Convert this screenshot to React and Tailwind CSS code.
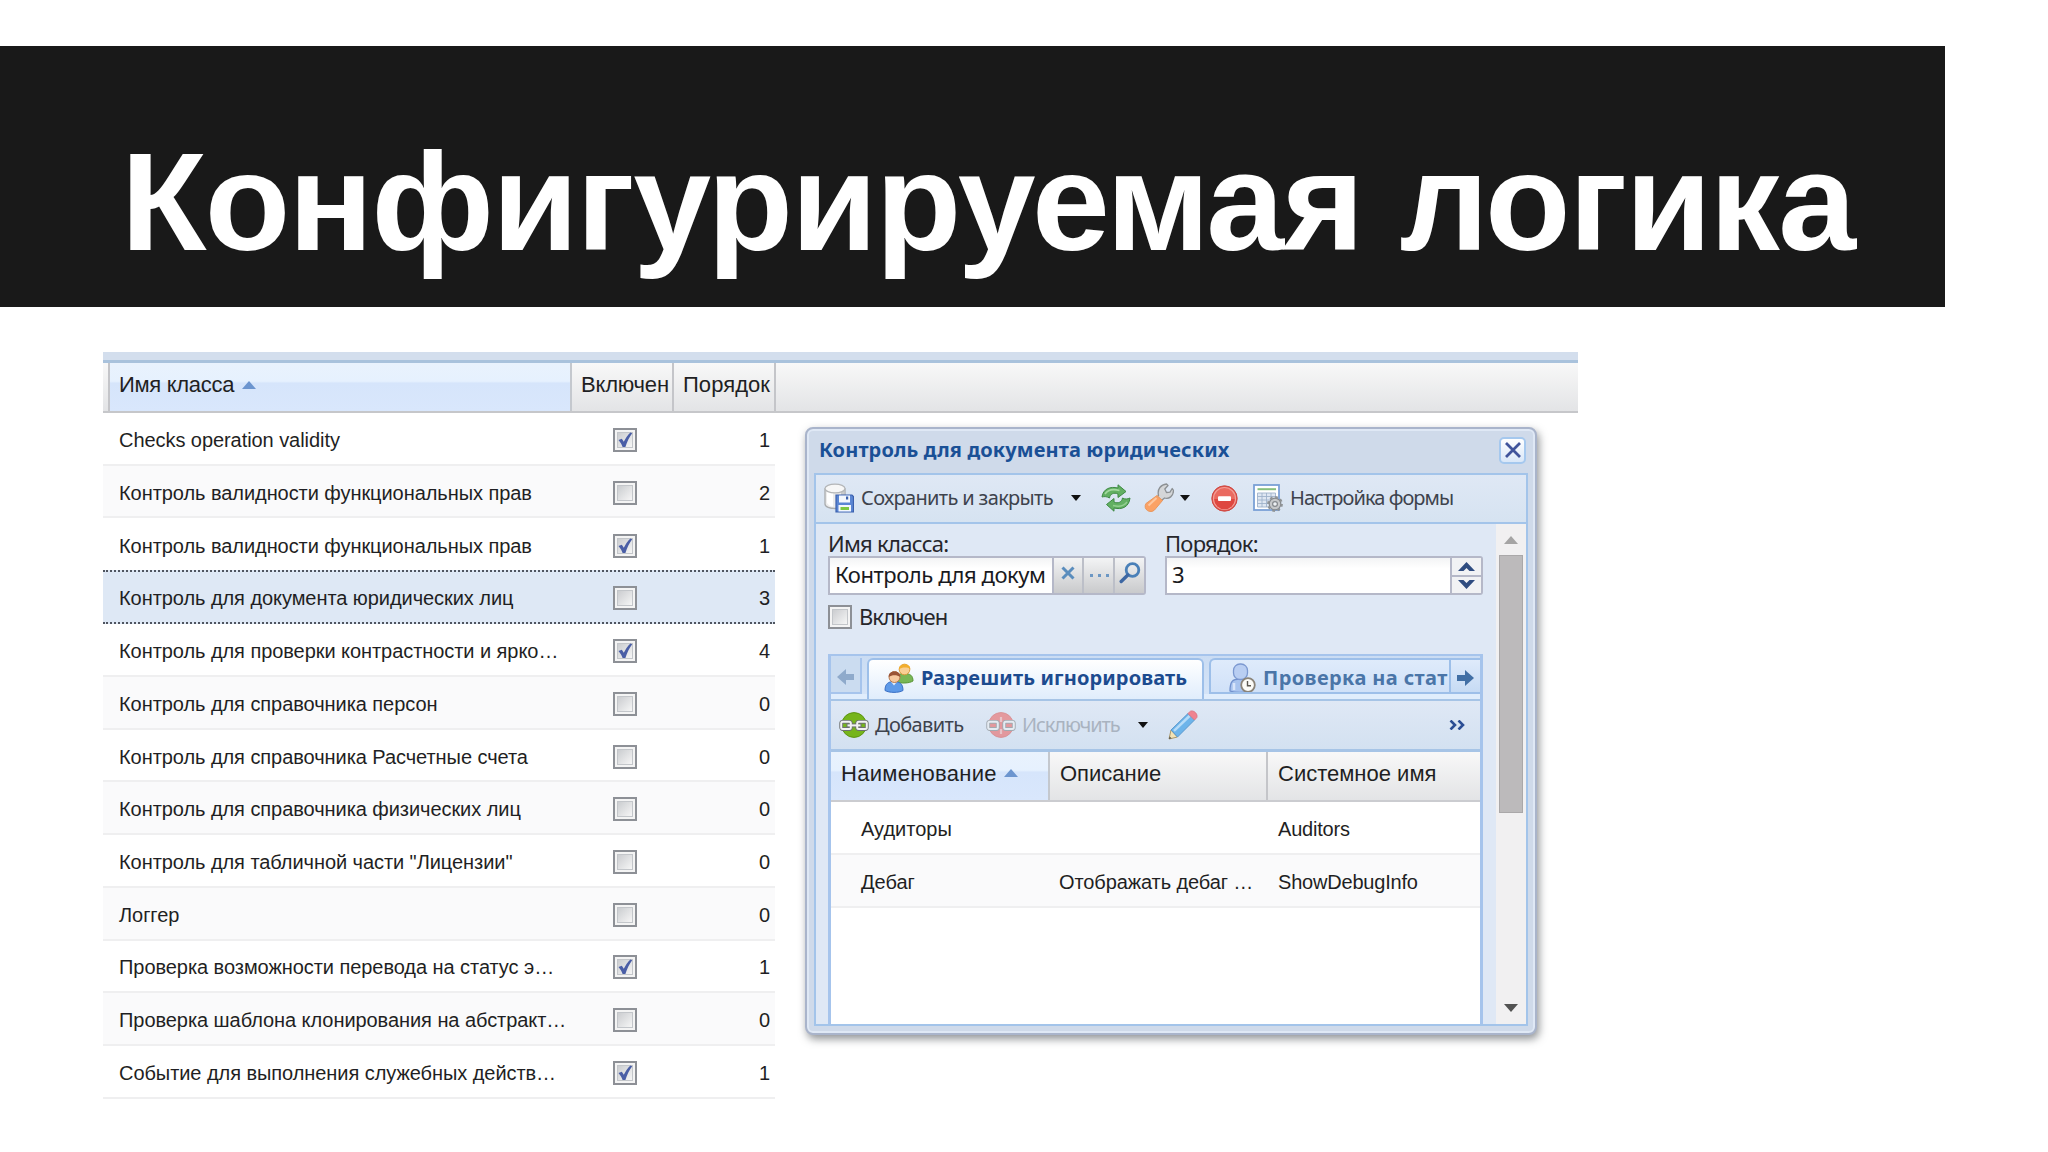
import clsx from 'clsx';

const CLASSES = [
    { name: 'Checks operation validity', enabled: true, order: 1 },
    { name: 'Контроль валидности функциональных прав', enabled: false, order: 2 },
    { name: 'Контроль валидности функциональных прав', enabled: true, order: 1 },
    { name: 'Контроль для документа юридических лиц', enabled: false, order: 3, selected: true },
    { name: 'Контроль для проверки контрастности и ярко…', enabled: true, order: 4 },
    { name: 'Контроль для справочника персон', enabled: false, order: 0 },
    { name: 'Контроль для справочника Расчетные счета', enabled: false, order: 0 },
    { name: 'Контроль для справочника физических лиц', enabled: false, order: 0 },
    { name: 'Контроль для табличной части "Лицензии"', enabled: false, order: 0 },
    { name: 'Логгер', enabled: false, order: 0 },
    { name: 'Проверка возможности перевода на статус э…', enabled: true, order: 1 },
    { name: 'Проверка шаблона клонирования на абстракт…', enabled: false, order: 0 },
    { name: 'Событие для выполнения служебных действ…', enabled: true, order: 1 },
];

const ROLES = [
    { name: 'Аудиторы', description: '', system: 'Auditors' },
    { name: 'Дебаг', description: 'Отображать дебаг …', system: 'ShowDebugInfo' },
];

function Checkbox({ checked }) {
    return (
        <span className="flex h-6 w-6 shrink-0 items-center justify-center border-2 border-[#8d9096] bg-[#f4f4f4]">
            <span className="flex h-4 w-4 items-center justify-center border border-[#c3c6ca] bg-linear-to-br from-[#cbcdd0] to-[#f6f6f6]">
                {checked && (
                    <svg viewBox="0 0 16 16" className="h-4 w-4 shrink-0 overflow-visible">
                        <path d="M1.500 8 L4.800 6.800 L6.800 9.800 C8.600 6 10.600 3 13.400 0.400 L15.200 1.200 C12.400 5 10 9.600 8.400 15 L5.600 15 C4.600 12.400 3.400 10.200 1.500 8Z" fill="#4a5ea6" />
                    </svg>
                )}
            </span>
        </span>
    );
}

function SortArrow() {
    return (
        <svg viewBox="0 0 14 8" className="h-2 w-3.5 shrink-0">
            <path d="M7 0 L14 8 H0Z" fill="#6c95cf" />
        </svg>
    );
}

function Caret({ className }) {
    return (
        <svg viewBox="0 0 10 6" className={clsx('h-1.5 w-2.5 shrink-0', className)}>
            <path d="M0 0 H10 L5 6Z" fill="#111" />
        </svg>
    );
}

function SaveIcon() {
    return (
        <svg viewBox="0 0 30 30" className="h-[30px] w-[30px] shrink-0">
            <path d="M1 6 V21 C1 27 21 27 21 21 V6Z" fill="#ececec" stroke="#a9abad" strokeWidth="1.3" />
            <path d="M3 8 V20 C5 23 8 23.500 9 23.500 V9Z" fill="#fff" />
            <path d="M17 8 V22 L20 21 V7Z" fill="#c9cacb" />
            <ellipse cx="11" cy="5.500" rx="10" ry="4.300" fill="#f7f7f7" stroke="#b4b6b8" strokeWidth="1.300" />
            <path d="M12 12 H28 L29.500 13.500 V29 H12Z" fill="#5b86d3" stroke="#3b60ad" strokeWidth="1.200" />
            <rect x="15" y="12.500" width="11" height="7" fill="#f3f7fd" />
            <rect x="22" y="13.500" width="2.200" height="3" fill="#3b60ad" />
            <rect x="14.500" y="22" width="12.500" height="6.500" fill="#f3f7fd" />
            <rect x="16.500" y="24" width="8.500" height="3" fill="#7dc843" />
        </svg>
    );
}

function RefreshIcon() {
    return (
        <svg viewBox="0 0 30 28" className="h-7 w-[30px] shrink-0" fill="#62b062" stroke="#3f8a44" strokeWidth="1" strokeLinejoin="round">
            <path d="M1 13 C2 5 9 2 17 4 L17 0.800 L25 7.500 L17 13.500 L17 10 C13 8 9 10 8.500 14 C6 12.500 3.500 12.300 1 13Z" />
            <path d="M29 14 C28 23 21 26 13 24 L13 27.200 L5.500 20.500 L13 14.500 L13 18 C17 20 21 18 21.500 14 C24 15.500 26.500 15.200 29 14Z" />
            <path d="M4 10 C7 5.500 12 4.800 18.500 6.500" fill="none" stroke="#a4d9a0" strokeWidth="1.600" />
            <path d="M26 18 C23 22 18 23 12 21.500" fill="none" stroke="#93cf90" strokeWidth="1.400" />
        </svg>
    );
}

function WrenchIcon() {
    return (
        <svg viewBox="0 0 30 30" className="h-[30px] w-[30px] shrink-0" strokeLinejoin="round">
            <path d="M14.500 12.500 C13 6 17 1.500 22.500 1 L24 2.500 L20.800 6 L22.500 9.500 L26 9.200 L28.200 5.500 L29.500 7.500 C29.500 13 25 16.500 20.500 15 L17.500 17.500 L13 14Z" fill="#d4d6d8" stroke="#8c9093" strokeWidth="1.300" />
            <path d="M13 12.500 L18.500 17.500 L10.500 27 C6.500 31 -1.500 26.500 2 20.500Z" fill="#fba265" stroke="#e8985f" strokeWidth="1" />
            <path d="M12.500 15 L4.500 22.500" stroke="#fdc79f" strokeWidth="2" />
        </svg>
    );
}

function StopIcon() {
    return (
        <svg viewBox="0 0 27 27" className="h-[27px] w-[27px] shrink-0">
            <circle cx="13.500" cy="13.500" r="12.700" fill="#e0514b" stroke="#cc4a44" strokeWidth="1" />
            <circle cx="13.500" cy="13.500" r="11" fill="#ea6a60" stroke="#f39d95" strokeWidth="1.200" />
            <path d="M3.200 14 A10.300 10.300 0 0 0 23.800 14Z" fill="#de4740" />
            <rect x="7" y="11.200" width="13" height="4.800" rx="1" fill="#fff" />
        </svg>
    );
}

function FormIcon() {
    return (
        <svg viewBox="0 0 30 28" className="h-7 w-[30px] shrink-0">
            <rect x="1" y="1" width="25" height="25" fill="#fff" stroke="#7aa0d6" strokeWidth="1.800" />
            <path d="M4.500 5.200 H23" stroke="#86bf7c" strokeWidth="2" />
            <rect x="4.500" y="9" width="18" height="14" fill="#dfe7f2" />
            <path d="M4.500 9 H22.500 M4.500 12.500 H22.500 M4.500 16 H22.500 M4.500 19.500 H22.500 M4.500 23 H22.500 M4.500 9 V23 M9 9 V23 M13.500 9 V23 M18 9 V23 M22.500 9 V23" stroke="#9fb2cb" strokeWidth="0.900" />
            <circle cx="22" cy="20" r="5.800" fill="#c6c8ca" stroke="#85898d" strokeWidth="1.200" />
            <circle cx="22" cy="20" r="6.800" fill="none" stroke="#8f9396" strokeWidth="2.200" strokeDasharray="2.700 2.640" />
            <circle cx="22" cy="20" r="2.400" fill="#eef1f4" stroke="#85898d" strokeWidth="1.200" />
        </svg>
    );
}

function UsersIcon() {
    return (
        <svg viewBox="0 0 30 30" className="h-[30px] w-[30px] shrink-0">
            <path d="M12 19 C12 12 15 10.500 20.500 10.500 C26 10.500 29 12.500 29 18 C25 20.500 17 20.500 12 19Z" fill="#79b755" stroke="#5a9639" strokeWidth="1" />
            <circle cx="20.500" cy="6.500" r="5.300" fill="#f9cf94" stroke="#d99a3a" strokeWidth="1" />
            <path d="M15 6.500 C14 0 26.500 -1 26.300 6 C23 4 18 4 15 6.500Z" fill="#f2ae2e" />
            <path d="M1 27.500 C1 20.500 4.500 18.500 10 18.500 C15.500 18.500 19 20.500 19 27.500 C15 30 5 30 1 27.500Z" fill="#5e9ae8" stroke="#3a6fc4" strokeWidth="1" />
            <path d="M7 18.800 L10 22.500 L13 18.800Z" fill="#e5effb" />
            <circle cx="10.500" cy="14" r="5.500" fill="#f6c9a0" stroke="#b77a50" strokeWidth="1" />
            <path d="M4.800 14 C4 6.800 17 6.800 16.200 14 C13 11.500 8 11.500 4.800 14Z" fill="#9a5436" />
        </svg>
    );
}

function UserClockIcon() {
    return (
        <svg viewBox="0 0 27 30" className="h-[30px] w-[27px] shrink-0">
            <path d="M1 28 C1 19 3 16 11 16 C19 16 21 19 21 28 C16 30 6 30 1 28Z" fill="#a8c3ee" stroke="#7291cd" strokeWidth="1.300" />
            <path d="M5 20 V27" stroke="#d9e5fa" strokeWidth="2.500" />
            <rect x="4.500" y="1" width="14" height="15.500" rx="6.500" fill="#b9cef2" stroke="#7b98d0" strokeWidth="1.300" />
            <circle cx="19" cy="22" r="6.800" fill="#fbfbf8" stroke="#8b8479" strokeWidth="1.800" />
            <path d="M18.500 18 V22.800 H22" fill="none" stroke="#5b5751" strokeWidth="1.400" />
        </svg>
    );
}

// Chain link on a coloured disc: green adds a relation, red removes it
function LinkIcon({ disc, rim, faded }) {
    return (
        <svg viewBox="0 0 30 26" className={clsx('h-[26px] w-[30px] shrink-0', faded && 'opacity-50')}>
            <circle cx="15" cy="13" r="12.400" fill={disc} stroke={rim} strokeWidth="1" />
            <g fill="none" strokeLinejoin="round">
                <rect x="2.200" y="9.800" width="9.600" height="7.200" rx="1.500" stroke="#6d7170" strokeWidth="3.800" />
                <rect x="18.200" y="9.800" width="9.600" height="7.200" rx="1.500" stroke="#6d7170" strokeWidth="3.800" />
                {!faded && <path d="M7.500 13.400 H22.500" stroke="#6d7170" strokeWidth="4" />}
                <rect x="2.200" y="9.800" width="9.600" height="7.200" rx="1.500" stroke="#f2f2f2" strokeWidth="2" />
                <rect x="18.200" y="9.800" width="9.600" height="7.200" rx="1.500" stroke="#f2f2f2" strokeWidth="2" />
                {faded
                    ? <path d="M15 5 V10 M15 17 V22" stroke="#f6a5a0" strokeWidth="2.200" />
                    : <path d="M8.500 13.400 H21.500" stroke="#f2f2f2" strokeWidth="2" />}
            </g>
        </svg>
    );
}

function PencilIcon() {
    return (
        <svg viewBox="0 0 30 30" className="h-[30px] w-[30px] shrink-0" strokeLinejoin="round">
            <path d="M1 29 L3 20 L9.500 27Z" fill="#f3e3b5" stroke="#a9976b" strokeWidth="1" />
            <path d="M1 29 L1.700 26.500 L3.500 28.300Z" fill="#4a4a4a" />
            <path d="M3 20 L20 3.500 L26.500 10 L9.500 27Z" fill="#6db4ea" stroke="#5a99ce" strokeWidth="1" />
            <path d="M6 20.800 L21.500 6" stroke="#b7dcf8" strokeWidth="2.500" />
            <path d="M20 3.500 L22.500 1.200 C26 0 30 4 28.800 7.500 L26.500 10Z" fill="#f08390" stroke="#dc7a86" strokeWidth="1" />
        </svg>
    );
}

function SearchIcon() {
    return (
        <svg viewBox="0 0 22 22" className="h-[22px] w-[22px] shrink-0" fill="none" strokeLinecap="round">
            <circle cx="13.500" cy="8" r="6.300" stroke="#4a80b8" strokeWidth="2.800" />
            <path d="M8.800 13 L2.200 19.500" stroke="#3d67a3" strokeWidth="3.400" />
        </svg>
    );
}

function ArrowIcon({ className }) {
    return (
        <svg viewBox="0 0 17 16" className={clsx('h-4 w-[17px] shrink-0', className)}>
            <path d="M0 5 H8 V0 L17 8 L8 16 V11 H0Z" fill="currentColor" />
        </svg>
    );
}

function ClassGrid() {
    return (
        <div className="w-[1475px] font-['Liberation_Sans',sans-serif] text-[#1f1f23]">
            <div className="h-2 bg-[#d3deed]" />
            <div className="h-[3px] bg-[#a9c2dc]" />
            <div className="flex h-[50px] border-b-2 border-[#c6c7ca] bg-linear-to-b from-[#f8f8f8] to-[#e3e4e6] text-[22px]">
                <div className="w-[7px] border-r-2 border-[#c4c5c9]" />
                <div className="flex w-[462px] items-center gap-[7px] border-r-2 border-[#c4c8ce] bg-[linear-gradient(#e9f2fd_0%,#e6f1fe_38%,#d6e5fb_42%,#d9e7fc_100%)] pb-[5px] pl-[9px]">
                    <span className="w-[116px] tracking-[-0.300px] whitespace-nowrap">Имя класса</span>
                    <SortArrow />
                </div>
                <div className="w-[102px] border-r-2 border-[#c4c5c9] pt-[8px] pl-[9px] leading-[28px] tracking-[-0.200px] whitespace-nowrap">Включен</div>
                <div className="w-[102px] border-r-2 border-[#c4c5c9] pt-[8px] pl-[9px] leading-[28px] tracking-[0.050px] whitespace-nowrap">Порядок</div>
            </div>
            {CLASSES.map((c, i) => (
                <div
                    key={i}
                    className={clsx(
                        'flex w-[672px] items-center pr-[5px] pl-4 text-[20px] tracking-[-0.060px]',
                        c.selected
                            ? 'h-[54px] border-y-2 border-dotted border-[#4f5560] bg-[#dee8f5] pt-px'
                            : 'h-[52.700px] border-b-2 border-[#efeff0] pt-[3px]',
                        !c.selected && i % 2 === 1 && 'bg-[#fafafb]',
                        CLASSES[i + 1]?.selected && 'h-[52px]! border-b-0!'
                    )}
                >
                    <span className="w-[494px] whitespace-nowrap">{c.name}</span>
                    <Checkbox checked={c.enabled} />
                    <span className="flex-1 text-right">{c.order}</span>
                </div>
            ))}
        </div>
    );
}

function WindowToolbar() {
    return (
        <div className="flex h-[49px] shrink-0 items-center border-b-2 border-[#a3c4ea] bg-linear-to-b from-[#dfe8f5] to-[#d6e3f1] pb-px pl-2 text-[20px] text-[#3e434d]">
            <SaveIcon />
            <span className="ml-[7px] w-[192px] tracking-[-0.660px] whitespace-nowrap">Сохранить и закрыть</span>
            <Caret className="mr-5 ml-[18px]" />
            <RefreshIcon />
            <span className="w-[13px]" />
            <WrenchIcon />
            <Caret className="mr-[21px] ml-[6px]" />
            <StopIcon />
            <span className="w-[15px]" />
            <FormIcon />
            <span className="ml-[7px] tracking-[-0.950px] whitespace-nowrap">Настройка формы</span>
        </div>
    );
}

function ClassFields() {
    return (
        <>
            <div className="flex gap-[19px]">
                <div className="w-[318px]">
                    <div className="h-[26px] text-[22px] leading-[26px] tracking-[-0.720px]">Имя класса:</div>
                    <div className="flex h-[39px] rounded-r-[3px] border-2 border-[#b5b8c8] bg-white">
                        <div className="w-[222px] bg-linear-to-b from-[#f3f4f5] to-white to-30% pl-[5px] text-[22px] leading-[33px] tracking-[-0.450px] whitespace-nowrap text-[#1a1a1e]">Контроль для докум</div>
                        <div className="flex flex-1 border-l-2 border-[#b5b8c8] bg-linear-to-b from-[#f3f4f5] to-[#c9cacc]">
                            <div className="flex w-[30px] items-center justify-center border-r-2 border-[#bcbfc8] pr-px pb-[5px]">
                                <svg viewBox="0 0 14 14" className="h-3.5 w-3.5">
                                    <path d="M1.500 1.500 L12.500 12.500 M12.500 1.500 L1.500 12.500" stroke="#5a8dbd" strokeWidth="3" />
                                </svg>
                            </div>
                            <div className="flex w-[31px] items-center justify-center gap-[5px] border-r-2 border-[#bcbfc8] pl-[2px]">
                                <span className="h-[3px] w-[3px] bg-[#6c97c4]" />
                                <span className="h-[3px] w-[3px] bg-[#6c97c4]" />
                                <span className="h-[3px] w-[3px] bg-[#6c97c4]" />
                            </div>
                            <div className="flex flex-1 items-center justify-center pb-[5px]">
                                <SearchIcon />
                            </div>
                        </div>
                    </div>
                </div>
                <div className="w-[318px]">
                    <div className="h-[26px] text-[22px] leading-[26px] tracking-[-0.780px]">Порядок:</div>
                    <div className="flex h-[39px] rounded-r-[3px] border-2 border-[#b5b8c8] bg-white">
                        <div className="flex-1 bg-linear-to-b from-[#f3f4f5] to-white to-30% pl-[5px] text-[22px] leading-[33px] text-[#1a1a1e]">3</div>
                        <div className="flex w-[31px] flex-col border-l-2 border-[#b5b8c8] bg-[#f1f2f4]">
                            <div className="flex flex-1 items-center justify-center border-b-2 border-[#b5b8c8]">
                                <svg viewBox="0 0 17 9" className="h-[9px] w-[17px]">
                                    <path d="M0 9 L8.500 0 L17 9 H11.500 L8.500 6 L5.500 9Z" fill="#2f4c80" />
                                </svg>
                            </div>
                            <div className="flex flex-1 items-center justify-center">
                                <svg viewBox="0 0 17 9" className="h-[9px] w-[17px]">
                                    <path d="M0 0 H5.500 L8.500 3 L11.500 0 H17 L8.500 9Z" fill="#2f4c80" />
                                </svg>
                            </div>
                        </div>
                    </div>
                </div>
            </div>
            <div className="mt-[10px] flex h-6 items-center gap-[7px] text-[22px]">
                <Checkbox />
                <span className="pb-[2px] tracking-[-0.950px]">Включен</span>
            </div>
        </>
    );
}

function TabPanel() {
    return (
        <div className="mt-[25px] flex w-[655px] flex-1 flex-col border-x-[3px] border-t-2 border-[#a6c4ec] bg-white">
            <div className="flex h-[43px] shrink-0 flex-col bg-linear-to-b from-[#cadcf3] to-[#d6e5f8]">
                <div className="flex h-[38px] pt-[2px]">
                    <div className="flex w-[31px] items-center justify-center border-r-2 border-b-2 border-[#a6c4ec] bg-[#cbdcf0] pt-[3px] text-[#8faacb]">
                        <ArrowIcon className="rotate-180" />
                    </div>
                    <div className="z-10 ml-[5px] flex h-[41px] w-[337px] items-center rounded-t-[6px] border-2 border-b-0 border-[#9dbfe9] bg-linear-to-b from-white to-[#e0edfc] pb-[3px] pl-[15px] text-[20px] font-bold text-[#1c4b8f]">
                        <UsersIcon />
                        <span className="ml-[7px] tracking-[0.120px] whitespace-nowrap">Разрешить игнорировать</span>
                    </div>
                    <div className="ml-[5px] flex min-w-0 flex-1 items-center overflow-hidden rounded-tl-[6px] border-2 border-r-0 border-[#9dbfe9] bg-linear-to-b from-[#dfebfb] to-[#d0e1f8] pt-[3px] pl-[18px] text-[20px] font-bold text-[#4a75a8]">
                        <UserClockIcon />
                        <span className="ml-[7px] tracking-[0.400px] whitespace-nowrap">Проверка на стат</span>
                    </div>
                    <div className="flex w-[31px] items-center justify-center border-2 border-r-0 border-[#9dbfe9] bg-linear-to-b from-[#dfebfb] to-[#c6dbf4] pt-[3px] text-[#416fa5]">
                        <ArrowIcon />
                    </div>
                </div>
                <div className="flex-1 bg-[#e0edfc]" />
            </div>
            <div className="flex h-[53px] shrink-0 items-center border-t-2 border-b-[3px] border-[#a6c4e6] bg-linear-to-b from-[#dfe8f5] to-[#d3e1f1] pl-2 text-[20px] text-[#3e434d]">
                <LinkIcon disc="#76b51b" rim="#5b9410" />
                <span className="ml-[6px] w-[90px] tracking-[-0.620px] whitespace-nowrap">Добавить</span>
                <span className="w-[21px]" />
                <LinkIcon disc="#ee4f4a" rim="#d8423d" faded />
                <span className="ml-[6px] w-[98px] tracking-[-1.100px] whitespace-nowrap text-[#a9b3c0]">Исключить</span>
                <Caret className="mr-5 ml-[18px]" />
                <PencilIcon />
                <svg viewBox="0 0 16 10" className="mr-[15px] ml-auto h-2.5 w-4" fill="none" stroke="#2a4d94" strokeWidth="2.600">
                    <path d="M1.500 0.500 L6 5 L1.500 9.500 M9.500 0.500 L14 5 L9.500 9.500" />
                </svg>
            </div>
            <div className="flex h-[50px] shrink-0 border-b-2 border-[#cbccd0] bg-linear-to-b from-[#f8f8f8] to-[#e3e4e6] font-['Liberation_Sans',sans-serif] text-[22px] text-[#1f1f23]">
                <div className="flex w-[219px] items-center gap-2 border-r-2 border-[#c4c8ce] bg-[linear-gradient(#e9f2fd_0%,#e6f1fe_38%,#d6e5fb_42%,#d9e7fc_100%)] pb-[6px] pl-[10px]">
                    <span className="w-[155px] tracking-[0.280px] whitespace-nowrap">Наименование</span>
                    <SortArrow />
                </div>
                <div className="flex w-[218px] items-center border-r-2 border-[#c4c5c9] pb-[6px] pl-[10px]">Описание</div>
                <div className="flex items-center pb-[6px] pl-[10px] whitespace-nowrap">Системное имя</div>
            </div>
            {ROLES.map((r, i) => (
                <div
                    key={r.system}
                    className={clsx(
                        "flex h-[53px] shrink-0 items-center border-b-2 border-[#efeff0] pt-[3px] pl-[30px] font-['Liberation_Sans',sans-serif] text-[20px] text-[#1f1f23]",
                        i % 2 === 1 && 'bg-[#fafafb]'
                    )}
                >
                    <span className="w-[198px]">{r.name}</span>
                    <span className="w-[219px] tracking-[-0.100px] whitespace-nowrap">{r.description}</span>
                    <span className="tracking-[-0.200px]">{r.system}</span>
                </div>
            ))}
        </div>
    );
}

function ClassWindow() {
    return (
        <div className="absolute top-[427px] left-[805px] flex h-[608px] w-[732px] flex-col rounded-[8px] border-2 border-[#a9b4cb] bg-[#cfdaea] px-[7px] pb-[7px] font-['Noto_Sans',sans-serif] text-[#26262b] shadow-[2px_4px_9px_rgba(70,75,80,0.600)] inset-shadow-[0_0_0_2px_#dfe8f5]">
            <div className="flex h-[44px] shrink-0 items-center justify-between pr-[2px] pb-[2px] pl-[5px]">
                <span className="text-[20px] font-bold tracking-[0.130px] whitespace-nowrap text-[#1a5096]">Контроль для документа юридических</span>
                <span className="flex h-[27px] w-[27px] items-center justify-center rounded-[5px] border-2 border-[#a5c8ee] bg-linear-to-b from-white to-[#d9e7f8]">
                    <svg viewBox="0 0 16 16" className="h-4 w-4">
                        <path d="M1 1 L15 15 M15 1 L1 15" stroke="#40549b" strokeWidth="2.800" />
                    </svg>
                </span>
            </div>
            <div className="flex min-h-0 flex-1 flex-col border-2 border-[#a3c4ea] bg-[#dfe8f5]">
                <WindowToolbar />
                <div className="flex min-h-0 flex-1">
                    <div className="flex flex-1 flex-col pt-[6px] pl-3">
                        <ClassFields />
                        <TabPanel />
                    </div>
                    <div className="flex w-[30px] flex-col items-center bg-[#f1f0f1] pt-3 pr-px pb-3">
                        <svg viewBox="0 0 14 8" className="h-2 w-3.5 shrink-0">
                            <path d="M7 0 L14 8 H0Z" fill="#a5a4a4" />
                        </svg>
                        <div className="mt-[11px] h-[258px] w-6 border border-[#aaa8a9] bg-[#bcbabb]" />
                        <svg viewBox="0 0 14 8" className="mt-auto h-2 w-3.5 shrink-0">
                            <path d="M0 0 H14 L7 8Z" fill="#525252" />
                        </svg>
                    </div>
                </div>
            </div>
        </div>
    );
}

export default function App() {
    return (
        <div className="relative h-[1152px] w-[2048px] overflow-hidden bg-white pt-[46px]">
            <h1 className="h-[261px] w-[1945px] bg-[#191919] pt-[76px] pl-[121px] font-['Liberation_Sans',sans-serif] text-[140px] leading-[160px] font-bold tracking-[-1.700px] whitespace-nowrap text-white">
                Конфигурируемая логика
            </h1>
            <div className="mt-[45px] ml-[103px]">
                <ClassGrid />
            </div>
            <ClassWindow />
        </div>
    );
}
